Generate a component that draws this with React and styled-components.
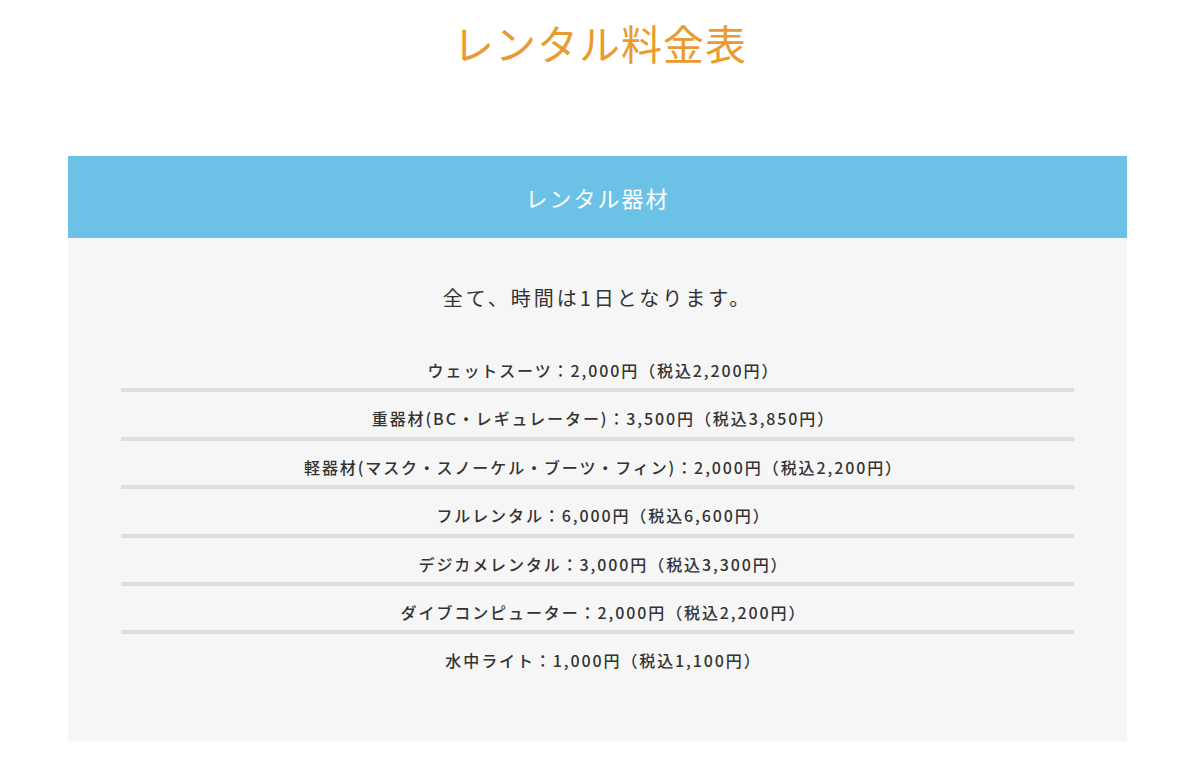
import React from 'react'
import styled, { createGlobalStyle } from 'styled-components'

const GlobalStyle = createGlobalStyle`
  body {
    margin: 0;
    background: #fff;
    font-family: "Noto Sans CJK JP", "Noto Sans", sans-serif;
    color: #333;
  }
`

const rentals = [
  'ウェットスーツ：2,000円（税込2,200円）',
  '重器材(BC・レギュレーター)：3,500円（税込3,850円）',
  '軽器材(マスク・スノーケル・ブーツ・フィン)：2,000円（税込2,200円）',
  'フルレンタル：6,000円（税込6,600円）',
  'デジカメレンタル：3,000円（税込3,300円）',
  'ダイブコンピューター：2,000円（税込2,200円）',
  '水中ライト：1,000円（税込1,100円）',
]

function App() {
  return (
    <Page>
      <GlobalStyle />
      <Title>レンタル料金表</Title>
      <Panel>
        <PanelHead>レンタル器材</PanelHead>
        <PanelBody>
          <Lead>全て、時間は1日となります。</Lead>
          <PriceList>
            {rentals.map((item, i) => (
              <PriceRow key={i} $last={i === rentals.length - 1}>{item}</PriceRow>
            ))}
          </PriceList>
        </PanelBody>
      </Panel>
    </Page>
  )
}

export default App

const Page = styled.div`
  width: 1200px;
  padding-top: 13px;
`

const Title = styled.h1`
  margin: 0;
  text-align: center;
  font-size: 41px;
  line-height: 58px;
  font-weight: 400;
  color: #e99b2f;
  letter-spacing: 1px;
`

const Panel = styled.section`
  width: 1059px;
  margin: 85px 0 0 68px;
  background: #f6f6f6;
`

const PanelHead = styled.div`
  height: 82px;
  display: flex;
  align-items: center;
  justify-content: center;
  background: #6cc2e6;
  color: #fff;
  font-size: 22px;
  letter-spacing: 2px;
`

const PanelBody = styled.div`
  padding: 45px 53px 58px;
`

const Lead = styled.p`
  margin: 0 0 31px;
  text-align: center;
  font-size: 20px;
  line-height: 30px;
  letter-spacing: 3px;
`

const PriceList = styled.ul`
  list-style: none;
  margin: 0;
  padding: 0;
`

const PriceRow = styled.li`
  padding: 14px 0 6.4px 12px;
  line-height: 24px;
  text-align: center;
  font-size: 16px;
  font-weight: 500;
  letter-spacing: 1.9px;
  border-bottom: 4px solid ${p => (p.$last ? 'transparent' : '#dedede')};
`
